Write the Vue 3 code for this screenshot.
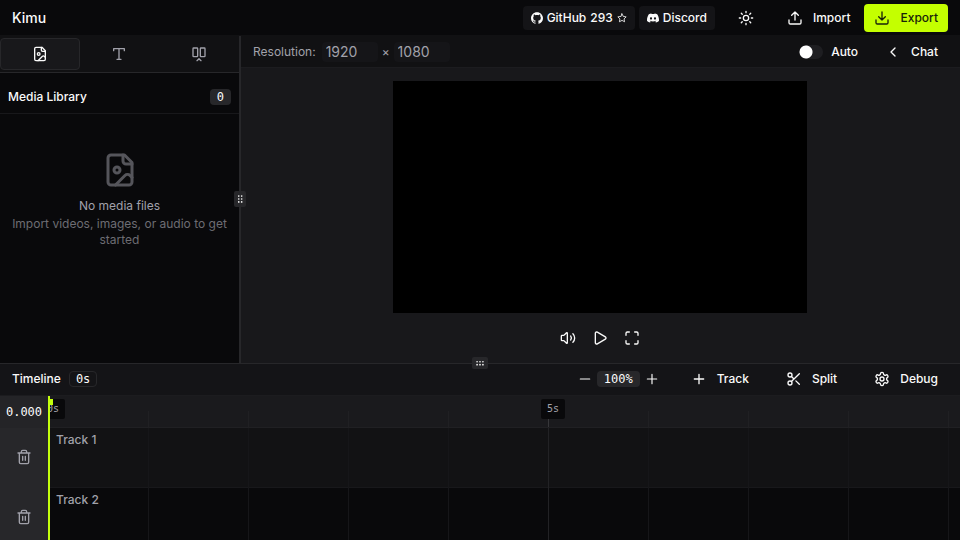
<script setup>
import { ref } from 'vue'

const tracks = ['Track 1', 'Track 2']
const ticks = [1, 2, 3, 4, 5, 6, 7, 8, 9]
const pixelsPerSecond = 100
const width = ref(1920)
const height = ref(1080)
const auto = ref(false)
</script>

<template>
  <div class="app">
    <header class="topbar">
      <h1>Kimu</h1>
      <nav class="top-actions">
        <a class="chip" href="#github">
          <svg class="brand" viewBox="0 0 24 24"><path d="M12 .297c-6.63 0-12 5.373-12 12 0 5.303 3.438 9.8 8.205 11.385.6.113.82-.258.82-.577 0-.285-.01-1.04-.015-2.04-3.338.724-4.042-1.61-4.042-1.61C4.422 18.07 3.633 17.7 3.633 17.7c-1.087-.744.084-.729.084-.729 1.205.084 1.838 1.236 1.838 1.236 1.07 1.835 2.809 1.305 3.495.998.108-.776.417-1.305.76-1.605-2.665-.3-5.466-1.332-5.466-5.93 0-1.31.465-2.38 1.235-3.22-.135-.303-.54-1.523.105-3.176 0 0 1.005-.322 3.3 1.23.96-.267 1.98-.399 3-.405 1.02.006 2.04.138 3 .405 2.28-1.552 3.285-1.23 3.285-1.23.645 1.653.24 2.873.12 3.176.765.84 1.23 1.91 1.23 3.22 0 4.61-2.805 5.625-5.475 5.92.42.36.81 1.096.81 2.22 0 1.606-.015 2.896-.015 3.286 0 .315.21.69.825.57C20.565 22.092 24 17.592 24 12.297c0-6.627-5.373-12-12-12" /></svg>
          <span>GitHub</span><span class="count">293</span>
          <svg class="icon star" viewBox="0 0 24 24"><path d="M12 2l3.09 6.26L22 9.27l-5 4.87 1.18 6.88L12 17.77l-6.18 3.25L7 14.14 2 9.27l6.91-1.01z" /></svg>
        </a>
        <a class="chip" href="#discord">
          <svg class="brand" viewBox="0 0 24 24"><path d="M20.317 4.37a19.79 19.79 0 0 0-4.885-1.515.074.074 0 0 0-.079.037c-.21.375-.444.864-.608 1.25a18.27 18.27 0 0 0-5.487 0 12.64 12.64 0 0 0-.617-1.25.077.077 0 0 0-.079-.037A19.736 19.736 0 0 0 3.677 4.37a.07.07 0 0 0-.032.027C.533 9.046-.32 13.58.099 18.057a.082.082 0 0 0 .031.057 19.9 19.9 0 0 0 5.993 3.03.078.078 0 0 0 .084-.028 14.09 14.09 0 0 0 1.226-1.994.076.076 0 0 0-.041-.106 13.107 13.107 0 0 1-1.872-.892.077.077 0 0 1-.008-.128 10.2 10.2 0 0 0 .372-.292.074.074 0 0 1 .077-.01c3.928 1.793 8.18 1.793 12.062 0a.074.074 0 0 1 .078.01c.12.098.246.198.373.292a.077.077 0 0 1-.006.127 12.299 12.299 0 0 1-1.873.892.077.077 0 0 0-.041.107c.36.698.772 1.362 1.225 1.993a.076.076 0 0 0 .084.028 19.839 19.839 0 0 0 6.002-3.03.077.077 0 0 0 .032-.054c.5-5.177-.838-9.674-3.549-13.66a.061.061 0 0 0-.031-.03zM8.02 15.33c-1.183 0-2.157-1.085-2.157-2.419 0-1.333.956-2.419 2.157-2.419 1.21 0 2.176 1.096 2.157 2.42 0 1.333-.956 2.418-2.157 2.418zm7.975 0c-1.183 0-2.157-1.085-2.157-2.419 0-1.333.955-2.419 2.157-2.419 1.21 0 2.176 1.096 2.157 2.42 0 1.333-.946 2.418-2.157 2.418z" /></svg>
          <span>Discord</span>
        </a>
        <button class="theme" aria-label="Toggle theme">
          <svg class="icon" viewBox="0 0 24 24"><circle cx="12" cy="12" r="4" /><path d="M12 2v2M12 20v2M4.93 4.93l1.41 1.41M17.66 17.66l1.41 1.41M2 12h2M20 12h2M6.34 17.66l-1.41 1.41M19.07 4.93l-1.41 1.41" /></svg>
        </button>
        <button class="action">
          <svg class="icon" viewBox="0 0 24 24"><path d="M21 15v4a2 2 0 0 1-2 2H5a2 2 0 0 1-2-2v-4M17 8l-5-5-5 5M12 3v12" /></svg>
          Import
        </button>
        <button class="action export">
          <svg class="icon" viewBox="0 0 24 24"><path d="M21 15v4a2 2 0 0 1-2 2H5a2 2 0 0 1-2-2v-4M7 10l5 5 5-5M12 15V3" /></svg>
          Export
        </button>
      </nav>
    </header>

    <main class="workspace">
      <aside class="sidebar">
        <div class="tabs">
          <button class="tab active" aria-label="Media">
            <svg class="icon" viewBox="0 0 24 24"><path d="M15 2H6a2 2 0 0 0-2 2v16a2 2 0 0 0 2 2h12a2 2 0 0 0 2-2V7Z" /><path d="M14 2v4a2 2 0 0 0 2 2h4" /><circle cx="10" cy="12" r="2" /><path d="m20 17-1.296-1.296a2.41 2.41 0 0 0-3.408 0L9 22" /></svg>
          </button>
          <button class="tab" aria-label="Text">
            <svg class="icon" viewBox="0 0 24 24"><path d="M4 7V4h16v3M9 20h6M12 4v16" /></svg>
          </button>
          <button class="tab" aria-label="Transitions">
            <svg class="icon" viewBox="0 0 24 24"><rect x="3" y="3" width="7" height="13" rx="1" /><path d="m9 22 3-3 3 3" /><rect x="14" y="3" width="7" height="13" rx="1" /></svg>
          </button>
        </div>
        <div class="library-head">
          <h2>Media Library</h2>
          <span class="badge">0</span>
        </div>
        <div class="empty">
          <svg class="icon" viewBox="0 0 24 24"><path d="M15 2H6a2 2 0 0 0-2 2v16a2 2 0 0 0 2 2h12a2 2 0 0 0 2-2V7Z" /><path d="M14 2v4a2 2 0 0 0 2 2h4" /><circle cx="10" cy="12" r="2" /><path d="m20 17-1.296-1.296a2.41 2.41 0 0 0-3.408 0L9 22" /></svg>
          <p class="empty-title">No media files</p>
          <p class="empty-text">Import videos, images, or audio to get started</p>
        </div>
      </aside>

      <section class="preview">
        <div class="grip vertical">
          <svg viewBox="0 0 24 24"><circle cx="9" cy="5" r="2" /><circle cx="9" cy="12" r="2" /><circle cx="9" cy="19" r="2" /><circle cx="16" cy="5" r="2" /><circle cx="16" cy="12" r="2" /><circle cx="16" cy="19" r="2" /></svg>
        </div>
        <div class="preview-bar">
          <label for="res-width">Resolution:</label>
          <input id="res-width" v-model="width" class="res" type="text">
          <span class="times">×</span>
          <input v-model="height" class="res" type="text" aria-label="Height">
          <label class="auto">
            <input v-model="auto" class="switch" type="checkbox" role="switch">
            Auto
          </label>
          <button class="chat">
            <svg class="icon" viewBox="0 0 24 24"><path d="m15 18-6-6 6-6" /></svg>
            Chat
          </button>
        </div>
        <div class="stage"><div class="video"></div></div>
        <div class="controls">
          <button aria-label="Mute">
            <svg class="icon" viewBox="0 0 24 24"><path d="M11 4.702a.705.705 0 0 0-1.203-.498L6.413 7.587A1.4 1.4 0 0 1 5.416 8H3a1 1 0 0 0-1 1v6a1 1 0 0 0 1 1h2.416a1.4 1.4 0 0 1 .997.413l3.383 3.384A.705.705 0 0 0 11 19.298zM16 9a5 5 0 0 1 0 6M19.364 18.364a9 9 0 0 0 0-12.728" /></svg>
          </button>
          <button aria-label="Play">
            <svg class="icon" viewBox="0 0 24 24"><path d="M5 5a2 2 0 0 1 3.008-1.728l11.997 6.998a2 2 0 0 1 .003 3.458l-12 7A2 2 0 0 1 5 19z" /></svg>
          </button>
          <button aria-label="Full screen">
            <svg class="icon" viewBox="0 0 24 24"><path d="M8 3H5a2 2 0 0 0-2 2v3M21 8V5a2 2 0 0 0-2-2h-3M3 16v3a2 2 0 0 0 2 2h3M16 21h3a2 2 0 0 0 2-2v-3" /></svg>
          </button>
        </div>
      </section>
    </main>

    <section class="timeline">
      <div class="grip horizontal">
        <svg viewBox="0 0 24 24"><circle cx="5" cy="9" r="2" /><circle cx="12" cy="9" r="2" /><circle cx="19" cy="9" r="2" /><circle cx="5" cy="16" r="2" /><circle cx="12" cy="16" r="2" /><circle cx="19" cy="16" r="2" /></svg>
      </div>
      <div class="timeline-bar">
        <h2>Timeline</h2>
        <span class="duration">0s</span>
        <div class="zoom">
          <button aria-label="Zoom out"><svg class="icon" viewBox="0 0 24 24"><path d="M4 12h16" /></svg></button>
          <span class="level">100%</span>
          <button aria-label="Zoom in"><svg class="icon" viewBox="0 0 24 24"><path d="M4 12h16M12 4v16" /></svg></button>
        </div>
        <button class="tool"><svg class="icon" viewBox="0 0 24 24"><path d="M5 12h14M12 5v14" /></svg>Track</button>
        <button class="tool"><svg class="icon" viewBox="0 0 24 24"><circle cx="6" cy="6" r="3" /><path d="M8.12 8.12 12 12M20 4 8.12 15.88" /><circle cx="6" cy="18" r="3" /><path d="M14.8 14.8 20 20" /></svg>Split</button>
        <button class="tool"><svg class="icon" viewBox="0 0 24 24"><path d="M12.22 2h-.44a2 2 0 0 0-2 2v.18a2 2 0 0 1-1 1.73l-.43.25a2 2 0 0 1-2 0l-.15-.08a2 2 0 0 0-2.73.73l-.22.38a2 2 0 0 0 .73 2.73l.15.1a2 2 0 0 1 1 1.72v.51a2 2 0 0 1-1 1.74l-.15.09a2 2 0 0 0-.73 2.73l.22.38a2 2 0 0 0 2.73.73l.15-.08a2 2 0 0 1 2 0l.43.25a2 2 0 0 1 1 1.73V20a2 2 0 0 0 2 2h.44a2 2 0 0 0 2-2v-.18a2 2 0 0 1 1-1.73l.43-.25a2 2 0 0 1 2 0l.15.08a2 2 0 0 0 2.73-.73l.22-.39a2 2 0 0 0-.73-2.73l-.15-.08a2 2 0 0 1-1-1.74v-.5a2 2 0 0 1 1-1.74l.15-.09a2 2 0 0 0 .73-2.73l-.22-.38a2 2 0 0 0-2.73-.73l-.15.08a2 2 0 0 1-2 0l-.43-.25a2 2 0 0 1-1-1.73V4a2 2 0 0 0-2-2z" /><circle cx="12" cy="12" r="3" /></svg>Debug</button>
      </div>
      <div class="timeline-body">
        <div class="gutter">
          <div class="timecode">0.000</div>
          <div v-for="track in tracks" :key="track" class="gutter-cell">
            <button :aria-label="'Delete ' + track"><svg class="icon" viewBox="0 0 24 24"><path d="M3 6h18M19 6v14a2 2 0 0 1-2 2H7a2 2 0 0 1-2-2V6M8 6V4a2 2 0 0 1 2-2h4a2 2 0 0 1 2 2v2M10 11v6M14 11v6" /></svg></button>
          </div>
        </div>
        <div class="lanes">
          <div class="ruler">
            <i v-for="t in ticks" :key="t" class="tick" :class="{ major: t % 5 === 0 }" :style="{ left: t * pixelsPerSecond + 'px' }"></i>
            <span v-for="s in [0, 5]" :key="s" class="mark" :style="{ left: s * pixelsPerSecond - 7 + 'px' }">{{ s }}s</span>
          </div>
          <div v-for="track in tracks" :key="track" class="lane">{{ track }}</div>
          <i v-for="t in ticks" :key="t" class="gridline" :class="{ major: t % 5 === 0 }" :style="{ left: t * pixelsPerSecond + 'px' }"></i>
          <div class="playhead"></div>
        </div>
      </div>
    </section>
  </div>
</template>

<style>
body {
  margin: 0;
  background: #09090b;
}
</style>

<style scoped>
* {
  box-sizing: border-box;
}
.app {
  display: flex;
  flex-direction: column;
  height: 100vh;
  overflow: hidden;
  color: #fafafa;
  background: #09090b;
  font: 500 12px/16px Inter, "Liberation Sans", sans-serif;
}
h1, h2, p {
  margin: 0;
  font: inherit;
}
button {
  display: flex;
  align-items: center;
  justify-content: center;
  padding: 0;
  border: 0;
  background: none;
  color: inherit;
  font: inherit;
}
.icon {
  flex: none;
  width: 16px;
  height: 16px;
  fill: none;
  stroke: currentColor;
  stroke-width: 2;
  stroke-linecap: round;
  stroke-linejoin: round;
}
.topbar {
  display: flex;
  align-items: center;
  justify-content: space-between;
  height: 36px;
  flex: none;
  padding: 0 12px;
  border-bottom: 1px solid #111113;
}
h1 {
  font-size: 14px;
  line-height: 20px;
}
.top-actions {
  display: flex;
  align-items: center;
}
.chip {
  display: flex;
  align-items: center;
  gap: 4px;
  height: 24px;
  margin-right: 4px;
  padding: 0 8px;
  border-radius: 4px;
  background: #141417;
  color: inherit;
  text-decoration: none;
}
.brand {
  width: 12px;
  height: 12px;
  fill: currentColor;
}
.star {
  width: 10px;
  height: 10px;
}
.theme {
  width: 28px;
  height: 28px;
  margin: 0 14px 0 13px;
}
.action {
  gap: 10px;
  height: 28px;
  padding: 0 14px 0 13px;
}
.export {
  padding: 0 10px;
  border-radius: 4px;
  background: #c4ff00;
  color: #18230a;
}
.workspace {
  display: flex;
  flex: 1;
  min-height: 0;
}
.sidebar {
  display: flex;
  flex-direction: column;
  width: 25%;
  border-right: 1px solid #27272a;
}
.tabs {
  display: grid;
  grid-template-columns: repeat(3, 1fr);
  flex: none;
  height: 37px;
  padding: 2px 0;
  border-bottom: 1px solid #27272a;
  background: #111113;
}
.tab {
  border: 1px solid transparent;
  border-radius: 4px;
  color: #a1a1aa;
}
.tab.active {
  border-color: #27272a;
  background: #18181b;
  color: #fafafa;
}
.library-head {
  display: flex;
  align-items: center;
  justify-content: space-between;
  flex: none;
  height: 41px;
  padding: 16px 8px 8px;
  border-bottom: 1px solid #18181b;
}
.badge {
  padding: 0 7px;
  border-radius: 4px;
  background: #27272a;
  font: 12px/16px "DejaVu Sans Mono", monospace;
}
.empty {
  display: flex;
  flex-direction: column;
  align-items: center;
  padding: 38px 8px 0;
  color: #a1a1aa;
  text-align: center;
}
.empty .icon {
  width: 36px;
  height: 36px;
  margin-bottom: 10px;
  opacity: 0.5;
}
.empty-title {
  margin-bottom: 2px;
  font-weight: 400;
}
.empty-text {
  color: #6d6d73;
  font-weight: 400;
}
.preview {
  position: relative;
  display: flex;
  flex-direction: column;
  flex: 1;
  min-width: 0;
  background: #18181b;
}
.preview::before {
  content: "";
  position: absolute;
  top: 0;
  bottom: 0;
  left: 0;
  width: 1px;
  background: #27272a;
}
.grip {
  position: absolute;
  z-index: 2;
  display: flex;
  align-items: center;
  justify-content: center;
  border-radius: 2px;
  background: #27272a;
}
.grip svg {
  width: 10px;
  height: 10px;
  fill: #fafafa;
}
.vertical {
  top: calc(50% - 9px);
  left: -6px;
  width: 12px;
  height: 16px;
}
.horizontal {
  top: -7px;
  left: calc(50% - 8px);
  width: 16px;
  height: 12px;
}
.preview-bar {
  display: flex;
  align-items: center;
  flex: none;
  height: 32px;
  padding: 0 22px 0 13px;
  border-bottom: 1px solid #1c1c1f;
  background: #111113;
  color: #a1a1aa;
  font-weight: 400;
}
.res {
  width: 56px;
  height: 20px;
  margin-left: 6px;
  padding: 0 4px;
  border: 0;
  border-radius: 4px;
  background: #151518;
  color: #a1a1aa;
  font: 400 14px/20px Inter, sans-serif;
}
.times {
  margin: 0 -2px 0 4px;
}
.auto {
  display: flex;
  align-items: center;
  gap: 8px;
  margin-left: auto;
  color: #fafafa;
  font-weight: 500;
}
.switch {
  width: 24px;
  height: 14px;
  margin: 0;
  border-radius: 7px;
  background: radial-gradient(circle at 7px 7px, #fff 6px, transparent 7px) #1e1e21;
  appearance: none;
}
.switch:checked {
  background: radial-gradient(circle at 17px 7px, #fff 6px, transparent 7px) #c4ff00;
}
.chat {
  gap: 10px;
  margin-left: 27px;
  color: #fafafa;
  font-weight: 500;
}
.stage {
  display: flex;
  justify-content: center;
  flex: 1;
  min-height: 0;
  padding-top: 13px;
}
.video {
  height: 100%;
  aspect-ratio: 25 / 14;
  background: #000;
}
.controls {
  display: flex;
  align-items: center;
  justify-content: center;
  gap: 4px;
  flex: none;
  height: 50px;
}
.controls button {
  width: 28px;
  height: 28px;
}
.timeline {
  position: relative;
  display: flex;
  flex-direction: column;
  flex: none;
  height: 177px;
  border-top: 1px solid #27272a;
  background: #111113;
}
.timeline-bar {
  display: flex;
  align-items: center;
  flex: none;
  height: 32px;
  padding: 0 22px 1px 12px;
  border-bottom: 1px solid #1c1c1f;
  background: #141417;
}
.duration {
  margin: 0 auto 0 8px;
  padding: 0 6px;
  border: 1px solid #27272a;
  border-radius: 4px;
  font: 12px/14px "DejaVu Sans Mono", monospace;
}
.zoom {
  display: flex;
  align-items: center;
  gap: 5px;
  margin-right: 32px;
}
.zoom .icon {
  width: 14px;
  height: 14px;
}
.level {
  padding: 0 7px;
  border-radius: 4px;
  background: #27272a;
  font: 12px/16px "DejaVu Sans Mono", monospace;
}
.tool {
  gap: 10px;
}
.tool + .tool {
  margin-left: 37px;
}
.timeline-body {
  display: flex;
  flex: 1;
  min-height: 0;
  overflow: hidden;
}
.gutter {
  flex: none;
  width: 48px;
  background: #27272a;
}
.timecode {
  height: 32px;
  background: #242427;
  font: 12px/32px "DejaVu Sans Mono", monospace;
  text-align: center;
}
.gutter-cell {
  display: flex;
  align-items: center;
  justify-content: center;
  height: 60px;
  padding-bottom: 2px;
  color: #a1a1aa;
}
.lanes {
  position: relative;
  flex: 1;
  overflow: hidden;
}
.ruler {
  position: relative;
  height: 32px;
  border-bottom: 1px solid #202023;
  background: #1a1a1d;
}
.mark {
  position: absolute;
  top: 3px;
  padding: 2px 6px;
  border-radius: 2px;
  background: #09090b;
  color: #a1a1aa;
  font: 10px/16px "DejaVu Sans Mono", monospace;
}
.tick,
.gridline {
  position: absolute;
  bottom: 0;
  width: 1px;
  background: #202023;
}
.tick {
  height: 16px;
}
.tick.major {
  background: #37373a;
}
.gridline {
  top: 32px;
  background: #161619;
}
.gridline.major {
  background: #222225;
}
.lane {
  height: 60px;
  padding: 4px 8px;
  border-bottom: 1px solid #18181b;
  background: #121214;
  color: #a1a1aa;
}
.lane:nth-child(odd) {
  background: #09090b;
}
.playhead {
  position: absolute;
  top: 0;
  bottom: 0;
  left: 0;
  width: 2px;
  background: #c4ff0d;
}
.playhead::before {
  content: "";
  position: absolute;
  top: 3px;
  left: 0;
  width: 5px;
  height: 6px;
  background: #c4ff0d;
}
</style>
